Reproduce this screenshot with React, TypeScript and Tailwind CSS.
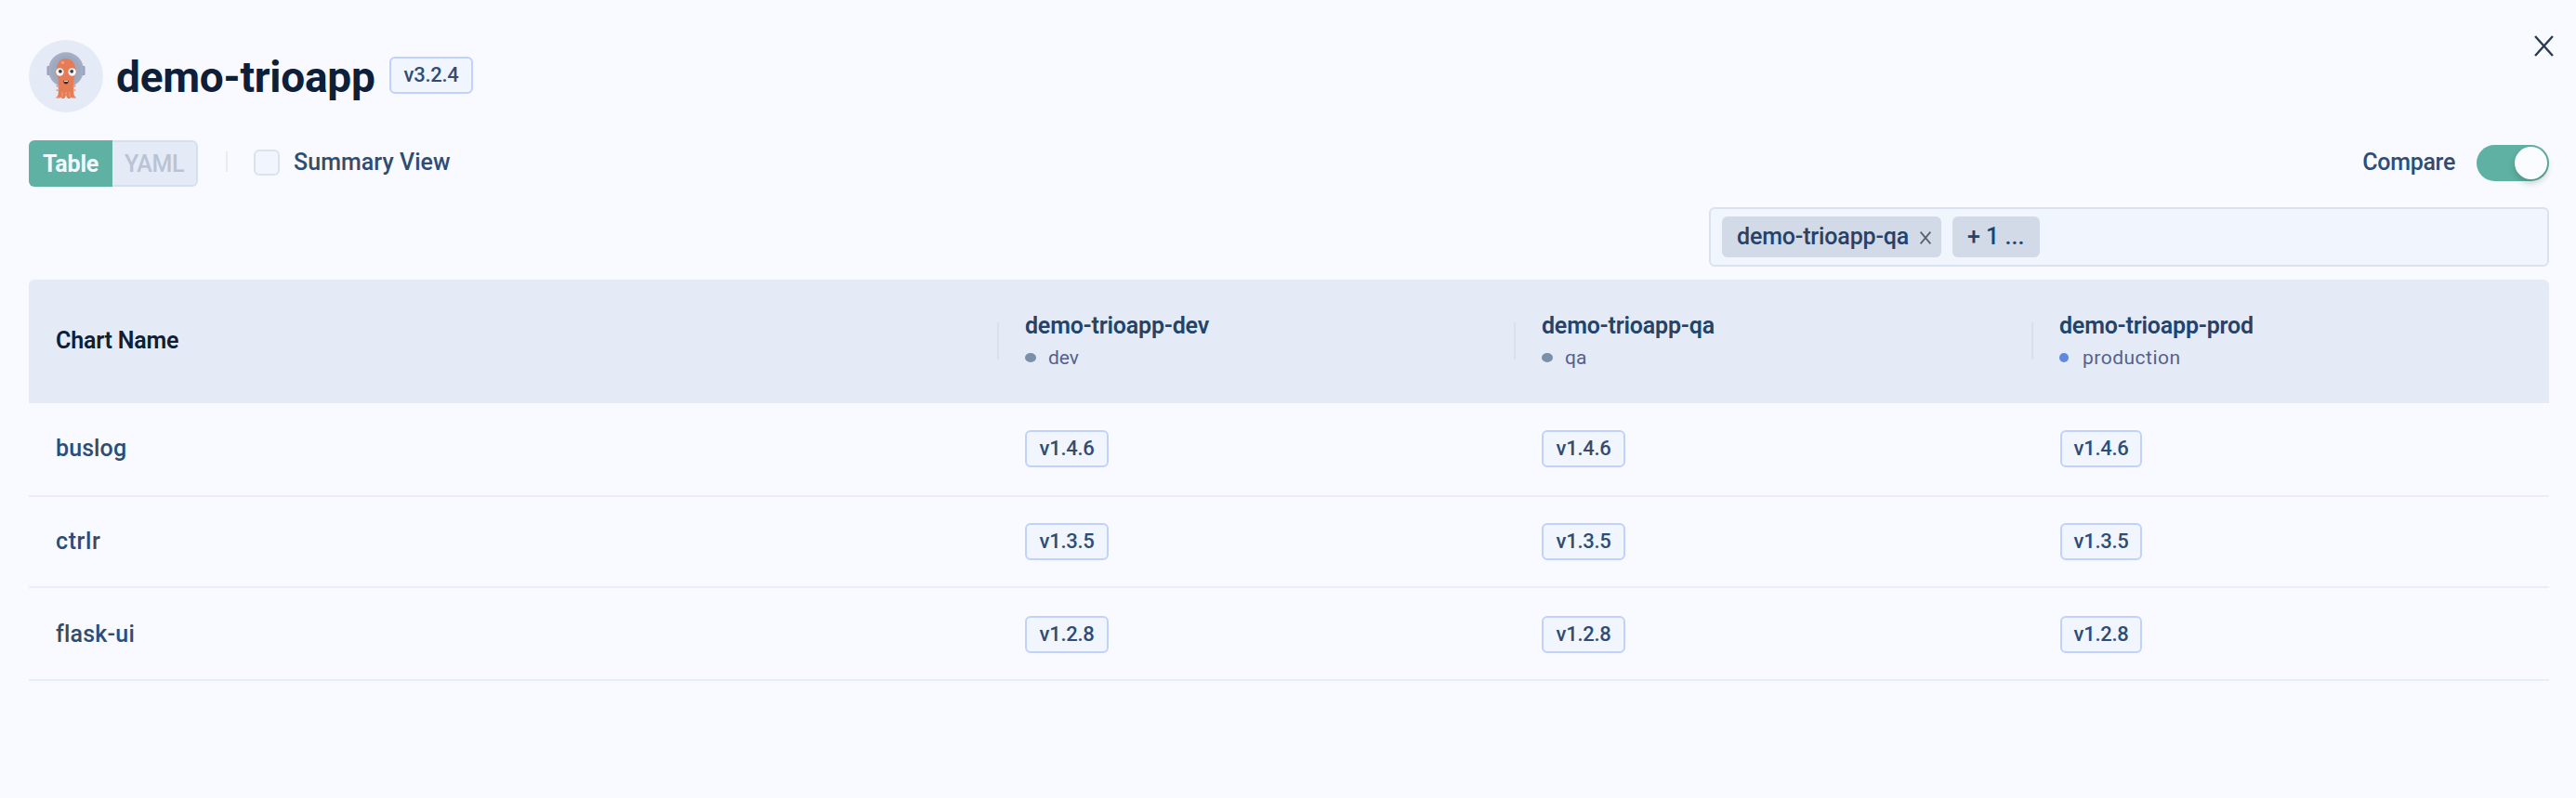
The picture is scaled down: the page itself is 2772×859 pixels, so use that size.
import { useState } from "react";

type Environment = { name: string; stage: string; dot: string; badge: string };
type ChartRow = { chart: string; version: string; height: string; tracking: string };

const environments: Environment[] = [
  { name: "demo-trioapp-dev", stage: "dev", dot: "w-3 mr-[13px] bg-[#7a8fa8]", badge: "w-[90px]" },
  { name: "demo-trioapp-qa", stage: "qa", dot: "w-3 mr-[13px] bg-[#7a8fa8]", badge: "w-[90px]" },
  {
    name: "demo-trioapp-prod",
    stage: "production",
    dot: "w-[10px] mr-[15px] bg-[#5f88e0]",
    badge: "ml-px w-[88px]",
  },
];

const rows: ChartRow[] = [
  { chart: "buslog", version: "v1.4.6", height: "h-[101px] pb-px", tracking: "tracking-[0.1px]" },
  { chart: "ctrlr", version: "v1.3.5", height: "h-[98px]", tracking: "tracking-[0.6px]" },
  { chart: "flask-ui", version: "v1.2.8", height: "h-[100px] pt-[2px]", tracking: "tracking-[0.2px]" },
];

const columns = "grid grid-cols-[1043px_556px_557px_1fr]";

function OctopusAvatar() {
  return (
    <div className="flex h-[78px] w-20 items-center justify-center rounded-[50%] bg-[#e4ebf7]">
      <svg width="44" height="52" viewBox="0 0 44 52">
        <rect x="1.500" y="15" width="4" height="10" rx="1" fill="#9a9dc4" />
        <rect x="38.500" y="15" width="4" height="10" rx="1" fill="#9a9dc4" />
        <circle cx="22" cy="19.200" r="18.900" fill="#a5adc2" />
        <circle cx="22" cy="20" r="16" fill="#9ca9bf" />
        <path
          d="M22 7C15.500 7 12 12.500 11.800 18.500C11.600 25 13.800 27 13.800 32V44C13.700 47 12.500 48.300 10.800 49C13 50.400 15.600 50 16.600 48.500C17.200 50.600 20.400 50.800 21.200 48.300L22 46.500L22.800 48.300C23.600 50.800 26.800 50.600 27.400 48.500C28.400 50 31 50.400 33.200 49C31.500 48.300 30.300 47 30.200 44V32C30.200 27 32.400 25 32.200 18.500C32 12.500 28.500 7 22 7Z"
          fill="#e67c56"
        />
        <path d="M11.500 36.300L14.500 37.500M32.500 36.300L29.500 37.500M11.500 41L14.500 41.300M32.500 41L29.500 41.300" stroke="#e99a80" strokeWidth="1.500" />
        <path d="M18 43V48.500M22 43V46M26 43V48.500" stroke="#efa48b" strokeWidth="0.900" />
        <path d="M11 49L15.500 49.300M28.500 49.300L33 49" stroke="#f1b7a4" strokeWidth="1" />
        <ellipse cx="18.500" cy="11.500" rx="1.700" ry="1.400" fill="#f0a588" />
        <circle cx="15.600" cy="21.500" r="5" fill="#e57a60" />
        <circle cx="28.400" cy="21.500" r="5" fill="#e57a60" />
        <circle cx="15.400" cy="21.500" r="4.200" fill="#fdf8f6" />
        <circle cx="28.600" cy="21.500" r="4.200" fill="#fdf8f6" />
        <circle cx="15.900" cy="20.800" r="1.900" fill="#3a4048" />
        <circle cx="28.200" cy="20.800" r="1.900" fill="#3a4048" />
        <path d="M19.300 30.800H24.700C24.700 33.500 23.600 34.600 22 34.600S19.300 33.500 19.300 30.800Z" fill="#3c2a2a" />
        <path d="M20 30.800H24V32H20Z" fill="#f5e7e2" />
      </svg>
    </div>
  );
}

function VersionBadge({ children, className = "" }: { children: string; className?: string }) {
  return (
    <span
      className={`flex h-10 items-center justify-center rounded-md border-2 border-[#c0d1fc] bg-[#f0f5fe] text-[22px] leading-none font-medium tracking-[-0.3px] text-[#2f4d73] ${className}`}
    >
      {children}
    </span>
  );
}

function CrossIcon({ className, strokeWidth }: { className: string; strokeWidth: number }) {
  return (
    <svg className={className} viewBox="0 0 20 22" preserveAspectRatio="none" fill="none" stroke="currentColor" strokeWidth={strokeWidth}>
      <path d="M1 1L19 21M19 1L1 21" />
    </svg>
  );
}

function ColumnHeader({ name, stage, dot }: Environment) {
  return (
    <div className="flex">
      <div className="mt-[46px] ml-[-1px] h-10 w-[2px] shrink-0 bg-[#dae1ec]" />
      <div className="pt-9 pl-7">
        <div className="h-7 text-[25px] leading-7 font-semibold tracking-[-0.2px] text-[#24436a]">{name}</div>
        <div className="mt-2 flex h-6 items-center">
          <span className={`h-[10px] rounded-[50%] ${dot}`} />
          <span className={`text-[21px] leading-6 text-[#56618a] ${stage === "production" ? "tracking-[0.5px]" : ""}`}>
            {stage}
          </span>
        </div>
      </div>
    </div>
  );
}

export default function App() {
  const [view, setView] = useState("Table");
  const [summary, setSummary] = useState(false);
  const [compare, setCompare] = useState(true);

  return (
    <div className="h-[859px] w-[2772px] overflow-hidden bg-[#f8faff] pr-[29px] pl-[31px] font-[Roboto,sans-serif]">
      <header className="flex h-[151px] items-start justify-between">
        <div className="flex pt-[43px]">
          <OctopusAvatar />
          <h1 className="mt-[10px] ml-[14px] w-[294px] text-[46px] leading-[60px] font-bold tracking-[-0.25px] whitespace-nowrap text-[#0d2038]">
            demo-trioapp
          </h1>
          <VersionBadge className="mt-[18px] w-[90px]">v3.2.4</VersionBadge>
        </div>
        <button className="mt-[38px] mr-[-5px] text-[#2a3b50]" aria-label="Close">
          <CrossIcon className="h-[23px] w-[21px]" strokeWidth={2.3} />
        </button>
      </header>

      <div className="flex h-[50px] justify-between">
        <div className="flex">
          <div className="flex h-[50px] w-[182px] overflow-hidden rounded-md text-[25px] leading-none">
            <button
              onClick={() => setView("Table")}
              aria-pressed={view === "Table"}
              className="w-[90px] bg-[#5fb1a3] font-bold tracking-[-0.2px] text-[#f3faff]"
            >
              Table
            </button>
            <button
              onClick={() => setView("YAML")}
              aria-pressed={view === "YAML"}
              className="w-[92px] rounded-r-md border-2 border-l-0 border-[#d6dfec] bg-[#e4ebf7] font-medium tracking-[-0.4px] text-[#b8c3d5]"
            >
              YAML
            </button>
          </div>
          <div className="mt-3 ml-[30px] h-[22px] w-[2px] bg-[#e6ecf6]" />
          <label className="ml-7 flex h-12 items-center">
            <input
              type="checkbox"
              checked={summary}
              onChange={() => setSummary(!summary)}
              className="h-7 w-7 appearance-none rounded-md border-2 border-[#d9e2ee] bg-[#f1f6fe]"
            />
            <span className="ml-[15px] pb-[2px] text-[25px] leading-none font-medium tracking-[0.05px] text-[#2f4d73]">
              Summary View
            </span>
          </label>
        </div>
        <div className="flex h-[49px] items-center">
          <span className="mr-[23px] pb-[2px] text-[25px] leading-none font-medium tracking-[-0.3px] text-[#2f4d73]">Compare</span>
          <button
            role="switch"
            aria-checked={compare}
            aria-label="Compare"
            onClick={() => setCompare(!compare)}
            className="flex h-[39px] w-[78px] items-center justify-end rounded-full bg-[#5fb1a3] pr-[2px]"
          >
            <span className="h-[35px] w-[35px] rounded-full bg-[#fbfcff] shadow-[0_4px_7px_rgba(0,35,11,0.2)]" />
          </button>
        </div>
      </div>

      <div className="mt-[22px] ml-auto flex h-16 w-[904px] items-center rounded-md border-2 border-[#d9e2ed] bg-[#f1f6fe] pl-3 text-[25px] leading-none font-medium text-[#24436a]">
        <div className="flex h-11 w-[236px] items-center rounded-md bg-[#d2dae7] pl-4">
          <span className="w-[197px] pb-[2px] tracking-[-0.15px]">demo-trioapp-qa</span>
          <CrossIcon className="mt-[2px] h-[14px] w-[12px] text-[#55606e]" strokeWidth={3} />
        </div>
        <div className="ml-3 flex h-11 w-[94px] items-center rounded-md bg-[#d2dae7] pb-[2px] pl-4">+ 1 ...</div>
      </div>

      <div className="mt-[14px]">
        <div className={`${columns} h-[133px] rounded-t-md bg-[#e4ebf7]`}>
          <div className="pt-[51px] pl-[29px] text-[25px] leading-[30px] font-semibold tracking-[-0.2px] text-[#0d2038]">
            Chart Name
          </div>
          {environments.map((env) => (
            <ColumnHeader key={env.name} {...env} />
          ))}
        </div>
        {rows.map((row) => (
          <div key={row.chart} className={`${columns} ${row.height} items-center border-b-2 border-[#e8eef9]`}>
            <div className={`pl-[29px] text-[25px] leading-7 font-medium text-[#2f4d73] ${row.tracking}`}>{row.chart}</div>
            {environments.map((env) => (
              <div key={env.name} className="pl-[29px]">
                <VersionBadge className={env.badge}>{row.version}</VersionBadge>
              </div>
            ))}
          </div>
        ))}
      </div>
    </div>
  );
}
